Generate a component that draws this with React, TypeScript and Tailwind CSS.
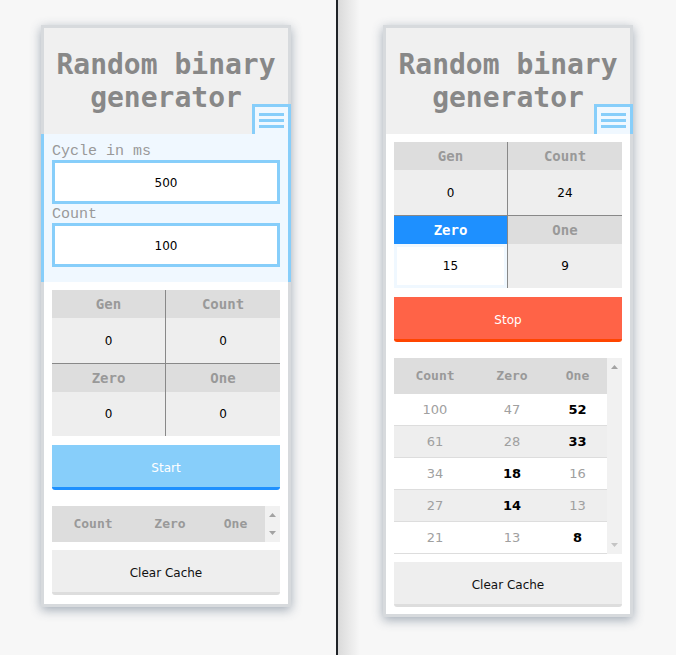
import React from "react";

const MONO = "font-['DejaVu_Sans_Mono',monospace]";
const LMONO = "font-['Liberation_Mono',monospace]";
const SANS = "font-['DejaVu_Sans',sans-serif]";

function Triangle({ up, color }: { up: boolean; color: string }) {
  return (
    <svg width="7" height="4" viewBox="0 0 7 4" className="block">
      <polygon points={up ? "0,4 3.5,0 7,4" : "0,0 7,0 3.5,4"} fill={color} />
    </svg>
  );
}

function Header() {
  return (
    <div
      className={`relative bg-[#f0f0f0] pt-[20px] pb-[20px] text-center text-[28px] leading-[33px] font-bold text-[#888] ${MONO}`}
    >
      Random binary
      <br />
      generator
      <div className="absolute -right-[3px] bottom-0 flex h-[30px] w-[39px] flex-col gap-[3px] border-[3px] border-b-0 border-[#87cefa] bg-[#f0f8ff] px-[4px] pt-[6px]">
        <div className="h-[3px] bg-[#87cefa]" />
        <div className="h-[3px] bg-[#87cefa]" />
        <div className="h-[3px] bg-[#87cefa]" />
      </div>
    </div>
  );
}

function StatHead({ label, active, left }: { label: string; active?: boolean; left?: boolean }) {
  return (
    <div
      className={`flex h-[28px] items-center justify-center text-[14px] font-bold ${MONO} ${
        left ? "w-[114px] border-r border-[#888]" : "flex-1"
      } ${active ? "bg-[#1e90ff] text-white" : "bg-[#ddd] text-[#999]"}`}
    >
      {label}
    </div>
  );
}

function StatVal({
  value,
  left,
  h,
  active,
}: {
  value: string;
  left?: boolean;
  h: string;
  active?: boolean;
}) {
  return (
    <div className={`flex ${h} ${left ? "w-[114px] border-r border-[#888]" : "flex-1"} bg-[#eee]`}>
      <div
        className={`flex flex-1 items-center justify-center text-[12px] text-black ${SANS} ${
          active ? "border-[3px] border-[#f0f8ff] bg-white" : ""
        }`}
      >
        {value}
      </div>
    </div>
  );
}

function Stats({ gen, count, zero, one, zeroActive }: { gen: string; count: string; zero: string; one: string; zeroActive?: boolean }) {
  return (
    <div className="flex flex-col">
      <div className="flex">
        <StatHead label="Gen" left />
        <StatHead label="Count" />
      </div>
      <div className="flex border-b border-[#888]">
        <StatVal value={gen} left h="h-[45px]" />
        <StatVal value={count} h="h-[45px]" />
      </div>
      <div className="flex">
        <StatHead label="Zero" left active={zeroActive} />
        <StatHead label="One" />
      </div>
      <div className="flex">
        <StatVal value={zero} left h="h-[44px]" active={zeroActive} />
        <StatVal value={one} h="h-[44px]" />
      </div>
    </div>
  );
}

type Row = { c: number; z: number; o: number; bold: "z" | "o" };

function History({ rows }: { rows: Row[] }) {
  const plain = "font-normal text-[#a0a0a0]";
  const strong = "font-bold text-black";
  return (
    <div className="flex">
      <div className="flex flex-1 flex-col">
        <div className={`flex h-[36px] items-center bg-[#ddd] text-[13px] font-bold text-[#999] ${MONO}`}>
          <div className="w-[82px] text-center">Count</div>
          <div className="w-[72px] text-center">Zero</div>
          <div className="flex-1 text-center">One</div>
        </div>
        {rows.map((r, i) => (
          <div
            key={i}
            className={`flex h-[32px] items-center border-b border-[#ddd] text-[13px] ${SANS} ${
              i % 2 === 1 ? "bg-[#eee]" : "bg-white"
            }`}
          >
            <div className={`w-[82px] text-center ${plain}`}>{r.c}</div>
            <div className={`w-[72px] text-center ${r.bold === "z" ? strong : plain}`}>{r.z}</div>
            <div className={`flex-1 text-center ${r.bold === "o" ? strong : plain}`}>{r.o}</div>
          </div>
        ))}
      </div>
      <div className="flex w-[15px] flex-col items-center justify-between bg-[#f1f1f1] py-[7px]">
        <Triangle up color="#a3a3a3" />
        <Triangle up={false} color={rows.length ? "#c4c4c4" : "#a3a3a3"} />
      </div>
    </div>
  );
}

function Button({ label, bg, border, text }: { label: string; bg: string; border: string; text: string }) {
  return (
    <div
      className={`flex h-[45px] items-center justify-center rounded-b-[3px] border-b-[3px] pt-[4px] text-[12px] ${SANS} ${bg} ${border} ${text}`}
    >
      {label}
    </div>
  );
}

function Panel({ children }: { children: React.ReactNode }) {
  return (
    <div className="mt-[25px] w-[250px] border-[3px] border-[#d7dadd] bg-white shadow-[0_3px_10px_rgba(60,80,105,0.45)]">
      {children}
    </div>
  );
}

function Label({ children }: { children: React.ReactNode }) {
  return <div className={`h-[19px] pt-[3px] text-[15px] leading-[16px] text-[#999] ${LMONO}`}>{children}</div>;
}

function Input({ value }: { value: string }) {
  return (
    <div
      className={`flex h-[44px] items-center justify-center border-[3px] border-[#87cefa] bg-white pt-[2px] text-[12px] text-black ${SANS}`}
    >
      {value}
    </div>
  );
}

export default function App() {
  const rows: Row[] = [
    { c: 100, z: 47, o: 52, bold: "o" },
    { c: 61, z: 28, o: 33, bold: "o" },
    { c: 34, z: 18, o: 16, bold: "z" },
    { c: 27, z: 14, o: 13, bold: "z" },
    { c: 21, z: 13, o: 8, bold: "o" },
  ];
  return (
    <div className="flex h-[655px] w-[676px] overflow-hidden bg-[#f7f7f7]">
      <div className="w-[336px] shrink-0 pl-[41px]">
        <Panel>
          <Header />
          <div className="-mx-[3px] border-x-[3px] border-[#87cefa] bg-[#f0f8ff] px-[8px] pt-[7px] pb-[15px]">
            <Label>Cycle in ms</Label>
            <Input value="500" />
            <Label>Count</Label>
            <Input value="100" />
          </div>
          <div className="flex flex-col px-[8px] pt-[8px] pb-[9px]">
            <Stats gen="0" count="0" zero="0" one="0" />
            <div className="mt-[9px]">
              <Button label="Start" bg="bg-[#87cefa]" border="border-[#1e90ff]" text="text-white" />
            </div>
            <div className="mt-[16px]">
              <History rows={[]} />
            </div>
            <div className="mt-[8px]">
              <Button label="Clear Cache" bg="bg-[#eee]" border="border-[#ddd]" text="text-[#111]" />
            </div>
          </div>
        </Panel>
      </div>
      <div className="w-[2px] shrink-0 bg-[#1f2327]" />
      <div className="flex-1 bg-[linear-gradient(to_right,#dadada,#f7f7f7_22px)] pl-[45px]">
        <Panel>
          <Header />
          <div className="flex flex-col px-[8px] pt-[8px] pb-[7px]">
            <Stats gen="0" count="24" zero="15" one="9" zeroActive />
            <div className="mt-[9px]">
              <Button label="Stop" bg="bg-[#ff6347]" border="border-[#ff4500]" text="text-white" />
            </div>
            <div className="mt-[16px]">
              <History rows={rows} />
            </div>
            <div className="mt-[8px]">
              <Button label="Clear Cache" bg="bg-[#eee]" border="border-[#ddd]" text="text-[#111]" />
            </div>
          </div>
        </Panel>
      </div>
    </div>
  );
}
